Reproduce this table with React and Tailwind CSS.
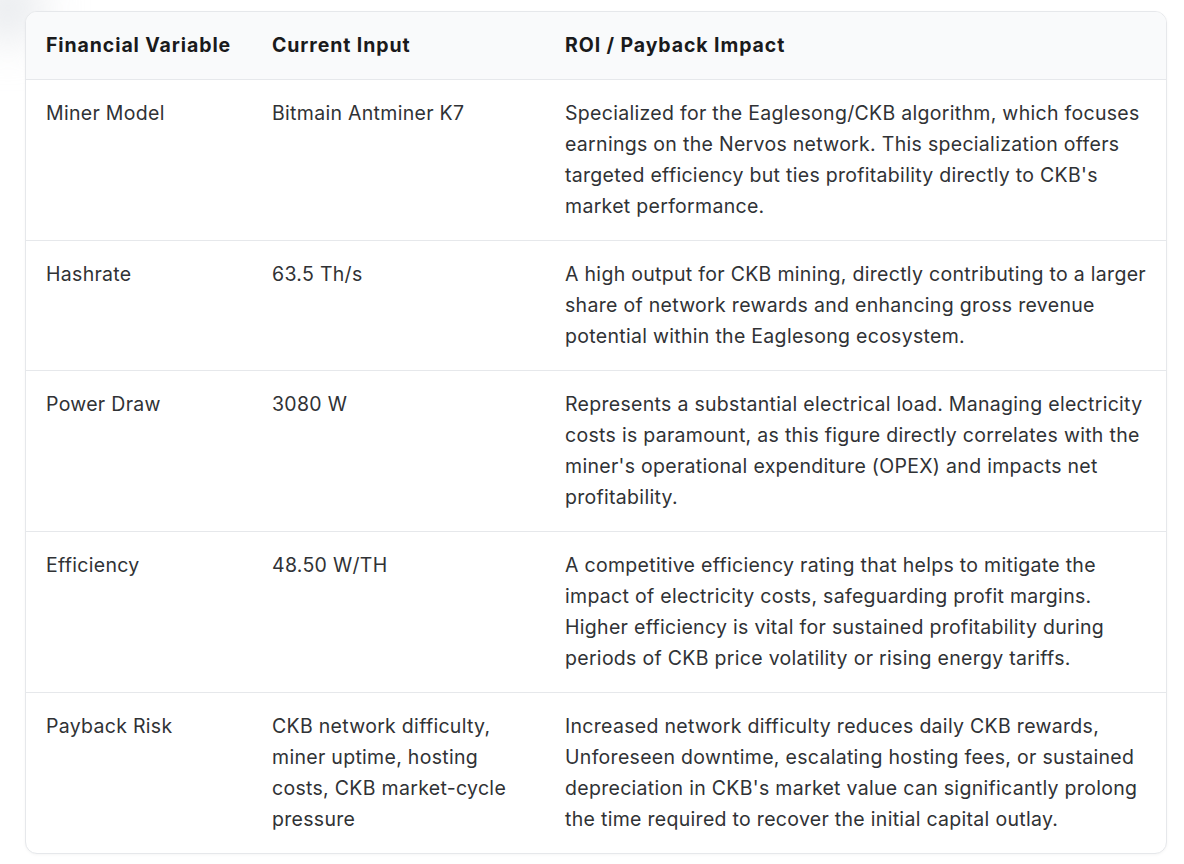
const rows = [
  {
    variable: 'Miner Model',
    input: 'Bitmain Antminer K7',
    impact:
      "Specialized for the Eaglesong/CKB algorithm, which focuses earnings on the Nervos network. This specialization offers targeted efficiency but ties profitability directly to CKB's market performance.",
  },
  {
    variable: 'Hashrate',
    input: '63.5 Th/s',
    impact:
      'A high output for CKB mining, directly contributing to a larger share of network rewards and enhancing gross revenue potential within the Eaglesong ecosystem.',
  },
  {
    variable: 'Power Draw',
    input: '3080 W',
    impact:
      "Represents a substantial electrical load. Managing electricity costs is paramount, as this figure directly correlates with the miner's operational expenditure (OPEX) and impacts net profitability.",
  },
  {
    variable: 'Efficiency',
    input: '48.50 W/TH',
    impact:
      'A competitive efficiency rating that helps to mitigate the impact of electricity costs, safeguarding profit margins. Higher efficiency is vital for sustained profitability during periods of CKB price volatility or rising energy tariffs.',
  },
  {
    variable: 'Payback Risk',
    input: 'CKB network difficulty, miner uptime, hosting costs, CKB market-cycle pressure',
    impact:
      "Increased network difficulty reduces daily CKB rewards, Unforeseen downtime, escalating hosting fees, or sustained depreciation in CKB's market value can significantly prolong the time required to recover the initial capital outlay.",
  },
];

export default function App() {
  return (
    <div
      className="relative min-h-[864px] w-[1184px] bg-white pt-[11px] pl-[25px]"
      style={{ fontFamily: 'Inter, "Noto Sans", sans-serif' }}
    >
      {/* faint smudge top-left */}
      <div className="absolute -left-6 -top-6 h-16 w-16 rounded-full bg-gray-300/60 blur-xl" />

      <div className="relative w-[1142px] overflow-hidden rounded-xl border border-[#e6e8eb] bg-white shadow-[0_1px_3px_rgba(0,0,0,0.04)]">
        <table className="w-full table-fixed border-collapse text-left text-[19.5px] leading-[31px] tracking-[0.3px]">
          <colgroup>
            <col className="w-[226px]" />
            <col className="w-[293px]" />
            <col />
          </colgroup>
          <thead>
            <tr className="bg-[#f9fafb] text-[#1a1a1c]">
              <th className="px-[20px] py-[18px] font-bold tracking-[0.9px]">Financial Variable</th>
              <th className="px-[20px] py-[18px] font-bold tracking-[0.9px]">Current Input</th>
              <th className="py-[18px] pr-[14px] pl-[20px] font-bold tracking-[0.9px]">ROI / Payback Impact</th>
            </tr>
          </thead>
          <tbody className="text-[#303235]">
            {rows.map((r) => (
              <tr key={r.variable} className="border-t border-[#e6e8eb] align-top">
                <td className="px-[20px] py-[18px]">{r.variable}</td>
                <td className="px-[20px] py-[18px]">{r.input}</td>
                <td className="py-[18px] pr-[14px] pl-[20px]">{r.impact}</td>
              </tr>
            ))}
          </tbody>
        </table>
      </div>
    </div>
  );
}
